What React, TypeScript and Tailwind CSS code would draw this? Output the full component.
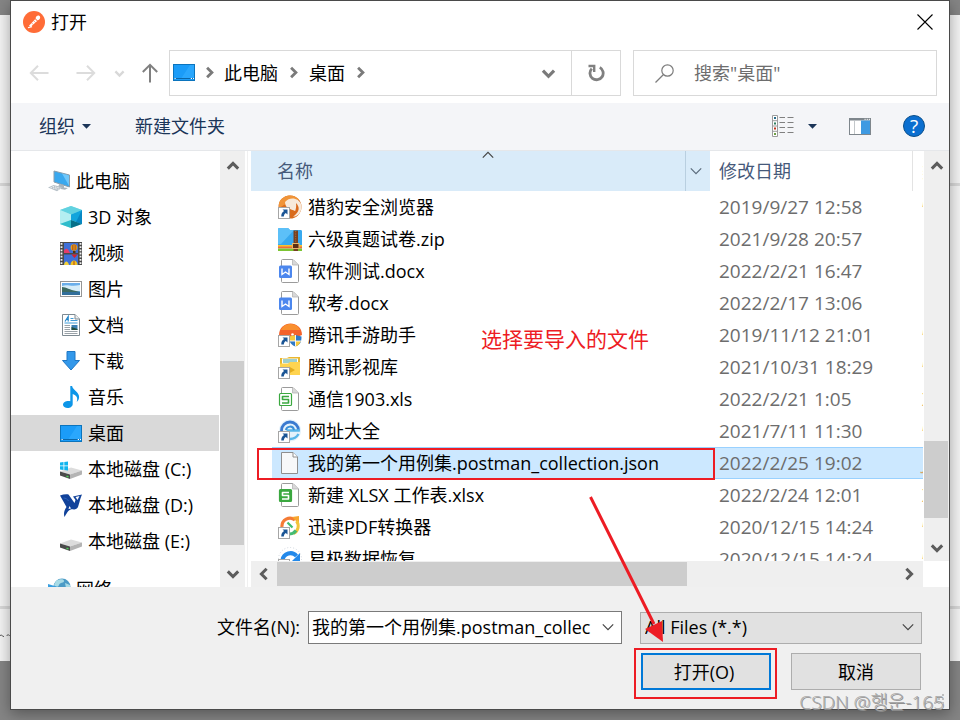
import React from 'react';

type IconProps = { className?: string };

/* ---------- small glyphs ---------- */

type Dir = 'up' | 'down' | 'left' | 'right';
const TURN: Record<Dir, string> = {
  up: 'rotate(0 7 7)',
  right: 'rotate(90 7 7)',
  down: 'rotate(180 7 7)',
  left: 'rotate(270 7 7)',
};

function BoldChevron({ dir, size = 14, color = '#5c5c5c', width = 3 }: { dir: Dir; size?: number; color?: string; width?: number }) {
  return (
    <svg width={size} height={size} viewBox="0 0 14 14" aria-hidden="true">
      <path d="M1.8 9.6 7 4.4l5.2 5.2" transform={TURN[dir]} fill="none" stroke={color} strokeWidth={width} />
    </svg>
  );
}

function ThinChevron({ dir, color = '#444' }: { dir: Dir; color?: string }) {
  return (
    <svg width="14" height="14" viewBox="0 0 14 14" aria-hidden="true">
      <path d="M1.8 9.6 7 4.4l5.2 5.2" transform={TURN[dir]} fill="none" stroke={color} strokeWidth="1.2" />
    </svg>
  );
}

function Caret() {
  return (
    <svg width="9" height="5" viewBox="0 0 9 5" aria-hidden="true">
      <path d="M0 0h9L4.500 4.800z" fill="#1b3558" />
    </svg>
  );
}

function PostmanLogo() {
  return (
    <svg width="22" height="22" viewBox="0 0 22 22" aria-hidden="true">
      <circle cx="11" cy="11" r="11" fill="#ff6c37" />
      <path d="M6 14.800 12.300 8l1.900 1.900-6.700 6z" fill="#fff" />
      <path d="M12.600 7.600c.2-2.200 2-3.600 3.900-2.700 1.500 1.500.3 3.600-2 4.500z" fill="#fff" />
      <path d="M8.500 11.800l2 2M10.600 9.700l2 2M12.300 8l2 2" stroke="#ff6c37" strokeWidth=".6" />
      <path d="M5 16.800l4-1.200" stroke="#fff" strokeWidth="1.200" />
    </svg>
  );
}

function Arrow({ dir, color }: { dir: 'left' | 'right' | 'up'; color: string }) {
  const turn = dir === 'left' ? '' : dir === 'right' ? 'rotate(180 10 10)' : 'rotate(90 10 10)';
  return (
    <svg width="20" height="20" viewBox="0 0 20 20" aria-hidden="true">
      <path d="M19.500 10H2M9 2.800 1.800 10 9 17.200" transform={turn} fill="none" stroke={color} strokeWidth="2" />
    </svg>
  );
}

function DesktopIcon({ className }: IconProps) {
  return (
    <svg width="22" height="17" viewBox="0 0 22 17" className={className} aria-hidden="true">
      <rect x=".5" y=".5" width="21" height="16" fill="#1b9cf8" stroke="#0b74bd" />
      <path d="M21 1v13H8.500L17 1z" fill="#33adff" opacity=".65" />
      <path d="M1 14.500h20" stroke="#0c67a8" />
      <path d="M1.500 14.500h1.200M17.800 14.500H19M20 14.500h1" stroke="#fff" />
    </svg>
  );
}

/* ---------- tree icons ---------- */

function ComputerIcon() {
  return (
    <svg width="24" height="22" viewBox="0 0 24 22" aria-hidden="true">
      <path d="M6 1l15.500 4v12L6 12z" fill="#3aa8ee" stroke="#8a9dab" strokeWidth="1" />
      <path d="M14 3.500l7 2v10.300z" fill="#6fc7fa" />
      <path d="M11 14l5 1v2.600l4 .4-3 1.700-7-1.300z" fill="#aab5bd" />
      <path d="M0 17.500 5.500 15l9 2.300-5.500 3.900z" fill="#b7c1c8" />
      <path d="M2.500 17.400l8 2M4.500 16.300l8 2" stroke="#fff" strokeWidth=".8" strokeDasharray="1.500 1" />
    </svg>
  );
}
function CubeIcon() {
  return (
    <svg width="22" height="22" viewBox="0 0 22 22" aria-hidden="true">
      <path d="M11 0 0 4v14l11 4 11-4V4z" fill="#8fe3ea" />
      <path d="M11 0 0 4l11 4.500L22 4z" fill="#62d2e0" />
      <path d="M0 4v14l11-4V8.500z" fill="#b4eef1" />
      <path d="M22 4v14l-11-4V8.500z" fill="#12a5dc" />
      <path d="M22 4v14l-6-2z" fill="#0788c4" />
      <path d="M0 18l11-4v8z" fill="#2fbccb" />
      <path d="M22 18l-11-4v8z" fill="#067089" />
    </svg>
  );
}
function VideoIcon() {
  return (
    <svg width="22" height="23" viewBox="0 0 22 23" aria-hidden="true">
      <path d="M0 0h22v23H0z" fill="#4a4a4a" />
      <path d="M1.500 1v22M20.500 1v22" stroke="#f0f0f0" strokeWidth="1.800" strokeDasharray="1.800 1.400" />
      <path d="M4 1h14v10H4zM4 12.500h14V23H4z" fill="#3e6fd8" />
      <path d="M4 8.500c2-3 4-2 6 2.500H4z" fill="#e43b6a" />
      <circle cx="14" cy="5.500" r="3.300" fill="#f1b71c" />
      <path d="M14 2.200v6.600M12.300 3v5M15.800 3v5" stroke="#a03019" strokeWidth=".8" />
      <path d="M13 9h2.500v2H13z" fill="#55320f" />
      <path d="M11.500 12.500h6L14.500 16z" fill="#d6202a" />
      <path d="M4 23c1-5 4-4 5 0z" fill="#f2d13b" />
      <path d="M10.500 23c0-6 7-6 7 0z" fill="#f2c41e" />
      <path d="M14 19v4" stroke="#b1401f" />
    </svg>
  );
}
function PictureIcon() {
  return (
    <svg width="22" height="16" viewBox="0 0 22 16" aria-hidden="true">
      <rect x=".5" y=".5" width="21" height="15" fill="#fff" stroke="#969696" />
      <path d="M2 2h18v12H2z" fill="#6aaeea" />
      <path d="M2 5c5-2 9 1 18-1v6H2z" fill="#d5ecf8" />
      <path d="M2 6c4 0 8 3 14 4l4 1v1H2z" fill="#3d6b62" />
      <path d="M2 11h18v3H2z" fill="#326f9b" />
    </svg>
  );
}
function DocumentIcon() {
  return (
    <svg width="18" height="22" viewBox="0 0 18 22" aria-hidden="true">
      <path d="M.5.5h12.500l4.500 4.500v16.500H.5z" fill="#fff" stroke="#7e8a92" />
      <path d="M13 .5V5h4.500" fill="#eee" stroke="#7e8a92" />
      <path d="M3 7.500 6.200 2.500v5M4.300 5.500H6" fill="none" stroke="#1f84c9" strokeWidth="1.200" />
      <path d="M8.500 4.500h3M8.500 6.500h7M2.500 9h13" stroke="#3f9bd6" />
      <path d="M2.500 11.500h5.500M2.500 13.500h5.500M2.500 15.500h5.500M2.500 17.500h13M2.500 19.500h13" stroke="#9aa2a8" />
      <path d="M9.500 11h6v5h-6z" fill="#3b80b4" />
      <path d="M9.500 13l6 2v1h-6z" fill="#234d3d" />
    </svg>
  );
}
function DownloadIcon() {
  return (
    <svg width="18" height="20" viewBox="0 0 18 20" aria-hidden="true">
      <path d="M5 .5h8v9h4.500L9 19 .5 9.500H5z" fill="#3398ea" stroke="#1f77c4" />
    </svg>
  );
}
function MusicIcon() {
  return (
    <svg width="17" height="22" viewBox="0 0 17 22" aria-hidden="true">
      <path d="M7.300 0h1.800c.6 4 7.400 6.200 7 11.200-.1 2-1 3.600-2.400 4.800 1.700-5-1-7-4-8v10c0 2.500-2.600 4-5 4-2.700 0-4.700-1.200-4.700-3.200 0-2.700 4-4.500 7.300-3.500z" fill="#0d96e8" />
    </svg>
  );
}
function DriveShape() {
  return (
    <>
      <path d="M0 13.500 11 9.500 22 12.500 10 16.500z" fill="#dcdcdc" />
      <path d="M0 13.500 10 16.500v4.500L0 17.500z" fill="#4b4b4b" />
      <path d="M10 16.500l12-4v4L10 21z" fill="#b4b4b4" />
      <path d="M6.500 18.200l2 .7" stroke="#4dd058" strokeWidth="1.500" />
    </>
  );
}
function SystemDriveIcon() {
  return (
    <svg width="22" height="23" viewBox="0 0 22 23" aria-hidden="true">
      <DriveShape />
      <path d="M0 4.500l3.500-.5v3.500H0zM4.300 4 8 3.400v4.100H4.300zM0 8.300h3.500V12L0 11.400zM4.300 8.300H8V12.500l-3.700-.4z" fill="#12b5ee" />
    </svg>
  );
}
function DriveIcon() {
  return (
    <svg width="22" height="23" viewBox="0 0 22 23" aria-hidden="true">
      <DriveShape />
    </svg>
  );
}
function EagleIcon() {
  return (
    <svg width="22" height="23" viewBox="0 0 22 23" aria-hidden="true">
      <path d="M0 1.500C3 .5 6 0 8.500.5L14.500 9 15.500 6 13 2.500 22 0.500c-1.200 3-2 5-2.500 7.500l-1.500 5c-1 2-3 2.800-5 2.200-4-.2-5 1.800-8.500 7.800-1-3-.5-6.500 2-10z" fill="#11429a" />
      <path d="M15.500 3l4-1-2 4z" fill="#fff" />
      <path d="M8.500 15l1-3 1.500 2.500z" fill="#fff" />
      <path d="M3.500 4c2 0 4 1 5 3" stroke="#2a62bd" fill="none" />
    </svg>
  );
}
function NetworkIcon() {
  return (
    <svg width="24" height="22" viewBox="0 0 24 22" aria-hidden="true">
      <circle cx="14" cy="9" r="8.500" fill="#4c9bc6" />
      <path d="M8 3c3-2 8-2.500 8 0s-4 1-5 4-4 2-5 0zM17 5l5 2v4l-4-1z" fill="#a8dbe6" />
      <path d="M0 6l10 3v8L0 14z" fill="#3a9fe0" />
    </svg>
  );
}

/* ---------- file icons ---------- */

function ShortcutBadge() {
  return (
    <>
      <rect x=".5" y="12.500" width="11" height="11" fill="#fff" stroke="#a6a6a6" />
      <path d="M4.500 14.500h5v5l-1.700-1.600c-1.500 1.100-1.800 2-2 3.600H3.300c-.2-2.500.8-4.500 2.800-5.500z" fill="#1a5595" />
    </>
  );
}
function FileSvg({ children }: { children: React.ReactNode }) {
  return (
    <svg width="24" height="24" viewBox="0 0 24 24" className="shrink-0" aria-hidden="true">
      {children}
    </svg>
  );
}
function CheetahIcon() {
  return (
    <FileSvg>
      <circle cx="12" cy="12" r="11.500" fill="#d96c1c" />
      <path d="M1 8C4-1 17-2 21 5L11 7 1 13z" fill="#f09438" />
      <path d="M7 7c5-6 14-4 16.300 2.500C24.500 16 20 22 15 21.500c3-2 3.500-4 2-5.500-4-2-10-2-10-9z" fill="#f7e9da" />
      <path d="M18 8c4 4 4 9-3 13.500-1 .5-3 .8-4 .5 5-2 8-7 7-14z" fill="#d9691d" />
      <ShortcutBadge />
    </FileSvg>
  );
}
function ZipIcon() {
  return (
    <FileSvg>
      <path d="M0 2.500c0-1 .5-1.500 1.500-1.500H10l2 2h10.500c1 0 1.500.5 1.500 1.500V20H0z" fill="#38a9ee" />
      <path d="M0 2.500c0-1 .5-1.500 1.500-1.500H10l2 2h4L3 17H0z" fill="#5cc0f8" />
      <path d="M0 18h24v2H0z" fill="#f7c52d" />
      <path d="M0 19.500h24v2H0z" fill="#ee6d3c" />
      <path d="M0 21.500h24V24H0z" fill="#7cc433" />
      <path d="M15.500 3.500h4.500V24h-4.500z" fill="#764021" />
      <path d="M17.700 4v12" stroke="#a8703a" strokeWidth="1" strokeDasharray="1.200 1.200" />
      <rect x="14.500" y="16.500" width="6.500" height="5" fill="#5a2e13" stroke="#e7b767" />
    </FileSvg>
  );
}
function Sheet() {
  return (
    <>
      <path d="M3.500 1.500c0-.6.400-1 1-1H15l5.500 5.500v16.500c0 .6-.4 1-1 1h-15c-.6 0-1-.4-1-1z" fill="#fff" stroke="#9b9b9b" />
      <path d="M14.500.5V6h6" fill="#d8d8d8" stroke="#b5b5b5" strokeWidth=".8" />
    </>
  );
}
function WordIcon() {
  return (
    <FileSvg>
      <Sheet />
      <rect x="1" y="6.500" width="13" height="12.500" rx="1.500" fill="#4c87ee" />
      <path d="M4 9.500v6l3.500-2.500 3.500 2.500v-6" fill="none" stroke="#fff" strokeWidth="1.400" />
    </FileSvg>
  );
}
function SpreadsheetIcon({ solid }: { solid?: boolean }) {
  return (
    <FileSvg>
      <Sheet />
      <rect x="1.500" y="6.500" width="12" height="12" rx="1" fill={solid ? '#3ba840' : '#fff'} stroke="#3ba840" strokeWidth="1.200" />
      <path d="M11 9.500H4.500v3H10.500v3.500H4" fill="none" stroke={solid ? '#fff' : '#3ba840'} strokeWidth="1.600" strokeLinejoin="round" />
    </FileSvg>
  );
}
function GameIcon() {
  return (
    <FileSvg>
      <path d="M1 12C1-3.500 24-3.500 24 12l-5 2H1z" fill="#f3622c" />
      <path d="M3 7C6-1 19-1 22 7z" fill="#f98f2f" />
      <circle cx="14.500" cy="11.500" r="1.300" fill="#fff" />
      <path d="M11 13.500l6.500-1.500 6 1.500c0 5-1 8-6 10-4-1.500-6.500-4-6.500-10z" fill="#2f79c6" />
      <path d="M17.500 18h5.300c-1 3-2.500 4.500-5.300 5.500zM11 13.500l6.500-1.500v6H11z" fill="#f6c93c" />
      <path d="M17.500 12v11.500M11 18h12" stroke="#fff" strokeWidth=".9" />
      <ShortcutBadge />
    </FileSvg>
  );
}
function MovieFolderIcon() {
  return (
    <FileSvg>
      <path d="M2 3h7l2-1h11v9H2z" fill="#e9b72f" />
      <path d="M4 3.500h16V9H4z" fill="#fff" />
      <path d="M5 5h14M5 7h14" stroke="#3f9f9b" strokeWidth="1.200" />
      <path d="M2 8.500h8L12 7h10v13H2z" fill="#ffd44f" />
      <path d="M11 11.500l6 3.500-6 3.500z" fill="#e3ac1f" />
      <ShortcutBadge />
    </FileSvg>
  );
}
function BrowserIcon() {
  return (
    <FileSvg>
      <circle cx="12" cy="11.500" r="11" fill="#e4f2fb" />
      <path d="M20.500 11.500A8.500 8.500 0 1 0 12 20" fill="none" stroke="#3a7ad0" strokeWidth="2.800" />
      <path d="M21.800 11.500H8.500M20.500 15c-2 3.500-5 5-8.500 5" fill="none" stroke="#58b6e8" strokeWidth="2.400" />
      <path d="M8 11c.5-4 7-5 8 0" fill="none" stroke="#3a8fd8" strokeWidth="2" />
      <ShortcutBadge />
    </FileSvg>
  );
}
function BlankFileIcon() {
  return (
    <FileSvg>
      <path d="M3.500 1.500H15l4.500 4.500v16.500h-16z" fill="#f7f8f9" stroke="#8e8e8e" />
      <path d="M15 1.500V6h4.500" fill="#fff" stroke="#8e8e8e" />
    </FileSvg>
  );
}
function PdfConvertIcon() {
  return (
    <FileSvg>
      <path d="M4 12a8 8 0 0 1 13-7" fill="none" stroke="#f47b35" strokeWidth="3.200" />
      <path d="M14 2l7-1v8z" fill="#f7a62f" />
      <path d="M18.500 6c3 4 2 10-3 12.500" fill="none" stroke="#f3c43a" strokeWidth="3" />
      <path d="M18 15.500c-2 3-6 4-9 3" fill="none" stroke="#44bb72" strokeWidth="3.200" />
      <path d="M9.500 7.500 14.500 12.500" fill="none" stroke="#41bd70" strokeWidth="2.200" />
      <ShortcutBadge />
    </FileSvg>
  );
}
function RecoveryIcon() {
  return (
    <FileSvg>
      <circle cx="12" cy="12" r="11.500" fill="#fff" stroke="#cfd6dd" strokeDasharray="1 2" />
      <path d="M4.500 13a8 8 0 0 1 14-4" fill="none" stroke="#2389ea" strokeWidth="4" />
      <path d="M22 6v8h-8z" fill="#2389ea" />
      <ShortcutBadge />
    </FileSvg>
  );
}

/* ---------- data ---------- */

const tree = [
  { label: '3D 对象', icon: <CubeIcon /> },
  { label: '视频', icon: <VideoIcon /> },
  { label: '图片', icon: <PictureIcon /> },
  { label: '文档', icon: <DocumentIcon /> },
  { label: '下载', icon: <DownloadIcon /> },
  { label: '音乐', icon: <MusicIcon /> },
  { label: '桌面', icon: <DesktopIcon />, selected: true },
  { label: '本地磁盘 (C:)', icon: <SystemDriveIcon /> },
  { label: '本地磁盘 (D:)', icon: <EagleIcon /> },
  { label: '本地磁盘 (E:)', icon: <DriveIcon /> },
];

const files = [
  { name: '猎豹安全浏览器', date: '2019/9/27 12:58', type: '快捷方式', icon: <CheetahIcon /> },
  { name: '六级真题试卷.zip', date: '2021/9/28 20:57', type: '', icon: <ZipIcon /> },
  { name: '软件测试.docx', date: '2022/2/21 16:47', type: '', icon: <WordIcon /> },
  { name: '软考.docx', date: '2022/2/17 13:06', type: '', icon: <WordIcon /> },
  { name: '腾讯手游助手', date: '2019/11/12 21:01', type: '快捷方式', icon: <GameIcon /> },
  { name: '腾讯影视库', date: '2021/10/31 18:29', type: '快捷方式', icon: <MovieFolderIcon /> },
  { name: '通信1903.xls', date: '2022/2/21 1:05', type: 'XLS 工作表', icon: <SpreadsheetIcon /> },
  { name: '网址大全', date: '2021/7/11 11:30', type: '快捷方式', icon: <BrowserIcon /> },
  { name: '我的第一个用例集.postman_collection.json', date: '2022/2/25 19:02', type: 'JSON 文件', icon: <BlankFileIcon />, selected: true },
  { name: '新建 XLSX 工作表.xlsx', date: '2022/2/24 12:01', type: 'XLSX 工作表', icon: <SpreadsheetIcon solid /> },
  { name: '迅读PDF转换器', date: '2020/12/15 14:24', type: '快捷方式', icon: <PdfConvertIcon /> },
  { name: '易极数据恢复', date: '2020/12/15 14:24', type: '快捷方式', icon: <RecoveryIcon /> },
];

/* ---------- sections ---------- */

function TitleBar() {
  return (
    <header className="flex h-[42px] shrink-0 items-center pl-3 pr-4">
      <PostmanLogo />
      <h1 className="ml-1.5 flex-1">打开</h1>
      <button type="button" aria-label="关闭">
        <svg width="16" height="16" viewBox="0 0 16 16" aria-hidden="true">
          <path d="M.5.5l15 15M15.500.5l-15 15" stroke="#000" strokeWidth="1.100" />
        </svg>
      </button>
    </header>
  );
}

function AddressRow() {
  return (
    <div className="mt-[7px] flex h-[46px] shrink-0 items-center pl-[18px] pr-3">
      <button type="button" aria-label="后退"><Arrow dir="left" color="#dcdcdc" /></button>
      <button type="button" aria-label="前进" className="ml-[27px]"><Arrow dir="right" color="#dcdcdc" /></button>
      <button type="button" aria-label="最近浏览的位置" className="ml-[18px]"><BoldChevron dir="down" size={11} color="#d8d8d8" /></button>
      <button type="button" aria-label="向上" className="ml-[15px]"><Arrow dir="up" color="#808080" /></button>
      <div className="ml-[9px] flex h-full flex-1 border border-[#d9d9d9]">
        <nav aria-label="路径" className="flex flex-1 items-center pb-px pl-[3px]">
          <DesktopIcon />
          <span className="ml-2"><BoldChevron dir="right" size={13} color="#7a7a7a" /></span>
          <a href="#pc" className="ml-2">此电脑</a>
          <span className="ml-[9px]"><BoldChevron dir="right" size={13} color="#7a7a7a" /></span>
          <a href="#desktop" className="ml-[9px]">桌面</a>
          <span className="ml-[9px]"><BoldChevron dir="right" size={13} color="#7a7a7a" /></span>
        </nav>
        <button type="button" aria-label="以前的位置" className="flex w-[46px] items-center justify-center">
          <BoldChevron dir="down" size={15} color="#7a7a7a" />
        </button>
        <button type="button" aria-label="刷新" className="flex w-[49px] items-center justify-center border-l border-[#d9d9d9]">
          <svg width="18" height="18" viewBox="0 0 18 18" aria-hidden="true">
            <path d="M12.800 3.400A6.600 6.600 0 1 1 4.800 4.600" fill="none" stroke="#808080" strokeWidth="2.800" />
            <path d="M1.500 2h5.700v6" fill="none" stroke="#808080" strokeWidth="2.400" />
          </svg>
        </button>
      </div>
      <label className="ml-3 flex h-full w-[304px] items-center border border-[#d9d9d9] pl-[21px]">
        <svg width="19" height="19" viewBox="0 0 19 19" aria-hidden="true">
          <circle cx="12.500" cy="6.500" r="5.700" fill="none" stroke="#7d7d7d" strokeWidth="1.200" />
          <path d="M8.500 10.500.5 18.500" stroke="#7d7d7d" strokeWidth="1.300" />
        </svg>
        <input
          type="text"
          aria-label="搜索桌面"
          placeholder={'搜索"桌面"'}
          className="ml-5 min-w-0 flex-1 outline-none placeholder:text-[#6d6d6d] placeholder:opacity-100"
        />
      </label>
    </div>
  );
}

function Toolbar() {
  return (
    <div className="mt-[7px] flex h-12 shrink-0 items-center border-b border-[#e5e7ea] bg-[#f4f5f8] pr-6 pb-px pl-7 text-[#1b3558]">
      <button type="button" className="flex items-center gap-[7px]">组织 <Caret /></button>
      <button type="button" className="ml-11">新建文件夹</button>
      <div className="flex-1" />
      <button type="button" aria-label="更改视图">
        <svg width="22" height="22" viewBox="0 0 22 22" aria-hidden="true">
          <path d="M.5.5h5v21h-5zM.5 5.700h5M.5 11h5M.5 16.300h5" fill="#fff" stroke="#9c9c9c" />
          <path d="M2 2h2v2H2z" fill="#256a8a" />
          <path d="M2 7.500h2v2H2z" fill="#2f7f60" />
          <path d="M2 12.500h2v2H2z" fill="#c0341d" />
          <path d="M2 18h2v2H2z" fill="#6d9f45" />
          <path d="M7.500 2.500h5.500M15.500 2.500h6M7.500 7.500h5.500M15.500 7.500h6M7.500 12.500h5.500M15.500 12.500h6M7.500 17.500h5.500M15.500 17.500h6" stroke="#808080" />
        </svg>
      </button>
      <button type="button" aria-label="更多选项" className="ml-[14px]"><Caret /></button>
      <button type="button" aria-label="显示预览窗格" className="ml-8">
        <svg width="22" height="17" viewBox="0 0 22 17" aria-hidden="true">
          <rect x=".5" y=".5" width="21" height="16" fill="#fff" stroke="#7e868c" />
          <path d="M0 1.500h22" stroke="#7e868c" strokeWidth="2" />
          <path d="M15.500 1.300h1.200M17.700 1.300h1.200M19.800 1.300h1.200" stroke="#fff" />
          <path d="M5.500 3v13" stroke="#c3c7ca" />
          <path d="M12 2.500h9V16h-9z" fill="#3e9ae2" />
        </svg>
      </button>
      <button type="button" aria-label="帮助" className="ml-8 flex size-[22px] items-center justify-center rounded-full border border-[#0b4f8a] bg-[#0b6fd0] text-[19px] leading-5 text-white">?</button>
    </div>
  );
}

function VerticalScroll({ label, before, thumb }: { label: string; before: string; thumb: string }) {
  return (
    <div aria-label={label} className="flex w-[25px] shrink-0 flex-col bg-[#efefef]">
      <button type="button" aria-label="向上滚动" className="flex h-[25px] w-[25px] shrink-0 items-end justify-center pb-[3px]"><BoldChevron dir="up" /></button>
      <div className={before} />
      <div className={`w-6 bg-[#cdcdcd] ${thumb}`} />
      <div className="flex-1" />
      <button type="button" aria-label="向下滚动" className="flex h-[26px] w-[25px] shrink-0 items-center justify-center"><BoldChevron dir="down" /></button>
    </div>
  );
}

function FolderTree() {
  return (
    <nav aria-label="文件夹" className="flex w-[240px] shrink-0">
      <div className="min-w-0 flex-1 overflow-hidden pt-3">
        <a href="#pc" className="flex h-9 items-center gap-1 pl-[37px]"><ComputerIcon />此电脑</a>
        <ul>
          {tree.map((item) => (
            <li key={item.label} className="w-[208px]">
              <a href="#folder" className={`flex h-9 items-center gap-[6px] pl-[49px] ${item.selected ? 'bg-[#d9d9d9]' : ''}`}>
                <span className="flex w-[22px] justify-center">{item.icon}</span>
                {item.label}
              </a>
            </li>
          ))}
        </ul>
        <a href="#network" className="mt-3 flex h-9 items-center gap-1 pl-[37px]"><NetworkIcon />网络</a>
      </div>
      <VerticalScroll label="文件夹滚动条" before="h-[185px]" thumb="h-[184px]" />
      <div className="w-[6px] shrink-0 border-r-[3px] border-l-2 border-white bg-[#f0f0f0]" />
    </nav>
  );
}

function FileTable() {
  return (
    <div className="mr-px min-w-0 flex-1 overflow-hidden">
      <table className="w-full table-fixed border-collapse text-left">
        <colgroup>
          <col className="w-[459px]" />
          <col className="w-[203px]" />
          <col />
        </colgroup>
        <thead>
          <tr className="h-10 text-[#45597a]">
            <th className="relative bg-[#d9ebf9] p-0 font-normal">
              <div className="flex h-10 items-center">
                <span className="flex-1 pl-[26px]">名称</span>
                <button type="button" aria-label="筛选" className="flex h-full w-[25px] items-center justify-center border-l border-[#b9cfe0] pr-1"><ThinChevron dir="down" color="#5b6b7c" /></button>
              </div>
              <span className="absolute -top-[3px] left-[230px] flex"><ThinChevron dir="up" /></span>
            </th>
            <th className="p-0 font-normal">
              <div className="flex h-10 items-center border-r border-[#e3e3e3] pl-[9px]">修改日期</div>
            </th>
            <th className="overflow-hidden p-0 pl-[9px] font-normal whitespace-nowrap text-[#d9a566]">类型</th>
          </tr>
        </thead>
        <tbody>
          {files.map((file) => {
            const fill = file.selected ? 'border-y border-[#99d1ff] bg-[#cce8ff]' : '';
            return (
              <tr key={file.name}>
                <td className="relative h-8 p-0">
                  <div className={`ml-[21px] flex h-8 items-center gap-[6px] pl-[6px] whitespace-nowrap ${fill}`}>
                    {file.icon}
                    {file.name}
                  </div>
                  {file.selected && <div className="absolute top-px -right-[5px] -bottom-px left-[6px] z-10 border-2 border-[#ed1c24]" />}
                </td>
                <td className="p-0">
                  <div className={`flex h-8 items-center pl-[9px] text-[19px] text-[#6d6d6d] ${fill}`}>{file.date}</div>
                </td>
                <td className="overflow-hidden p-0">
                  <div className={`flex h-8 items-center pl-[9px] whitespace-nowrap text-[#d9a566] ${fill}`}>{file.type}</div>
                </td>
              </tr>
            );
          })}
        </tbody>
      </table>
    </div>
  );
}

function FilePane() {
  return (
    <section aria-label="文件列表" className="flex min-w-0 flex-1 flex-col">
      <div className="flex min-h-0 flex-1">
        <FileTable />
        <VerticalScroll label="文件滚动条" before="h-[265px]" thumb="h-[77px]" />
      </div>
      <div className="flex h-[26px] shrink-0">
        <div className="flex flex-1 items-center bg-[#efefef]">
          <button type="button" aria-label="向左滚动" className="flex w-[26px] justify-center"><BoldChevron dir="left" /></button>
          <div className="h-6 w-[410px] bg-[#cdcdcd]" />
          <div className="flex-1" />
          <button type="button" aria-label="向右滚动" className="flex w-[28px] justify-center"><BoldChevron dir="right" /></button>
        </div>
        <div className="w-[26px]" />
      </div>
    </section>
  );
}

function Footer() {
  return (
    <footer className="h-[122px] shrink-0 bg-[#f0f0f0] pt-6">
      <div className="flex h-[33px] items-center pr-[27px]">
        <label htmlFor="filename" className="w-[297px] pr-2 pb-px text-right">文件名(N):</label>
        <div className="flex h-full flex-1 items-center border border-[#7a7a7a] bg-white pr-[6px] pb-px pl-[3px]">
          <input id="filename" type="text" defaultValue="我的第一个用例集.postman_collec" className="min-w-0 flex-1 outline-none" />
          <button type="button" aria-label="文件名列表"><ThinChevron dir="down" /></button>
        </div>
        <div className="relative ml-[18px] h-8 w-[282px]">
          <select aria-label="文件类型" className="h-full w-full appearance-none border border-[#adadad] bg-[#e1e1e1] pb-px pl-1 outline-none">
            <option>All Files (*.*)</option>
          </select>
          <span className="pointer-events-none absolute top-2 right-[7px] flex"><ThinChevron dir="down" /></span>
        </div>
      </div>
      <div className="mt-1 flex items-start justify-end gap-[14px] pr-7">
        <div className="h-[51px] w-[143px] border-2 border-[#ed1c24] pt-[3px] pr-1 pl-[5px]">
          <button type="button" className="h-[37px] w-full border-2 border-[#0078d7] bg-[#e1e1e1] pr-1">打开(O)</button>
        </div>
        <button type="button" className="mt-[5px] h-[37px] w-[130px] border border-[#adadad] bg-[#e1e1e1]">取消</button>
      </div>
    </footer>
  );
}

function Annotations() {
  return (
    <>
      <p className="absolute top-[324px] left-[470px] text-[21px] leading-7 text-[#ed1c24]">选择要导入的文件</p>
      <svg className="pointer-events-none absolute top-[494px] left-[577px]" width="80" height="150" viewBox="0 0 80 150" aria-hidden="true">
        <path d="M2.500 2 66 129" stroke="#ed1c24" strokeWidth="3" />
        <path d="M75 147 57 134l17-8z" fill="#ed1c24" />
      </svg>
      <svg className="absolute right-1 bottom-1 z-10" width="12" height="12" viewBox="0 0 12 12" aria-hidden="true">
        <path d="M9 1h2v2H9zM9 5h2v2H9zM9 9h2v2H9zM5 5h2v2H5zM5 9h2v2H5zM1 9h2v2H1z" fill="#bfbfbf" />
      </svg>
      <p className="absolute right-[5px] -bottom-[7px] font-['Open_Sans','Noto_Sans_CJK_KR',sans-serif] text-[19px] leading-7 font-light whitespace-nowrap text-[#a8a8a8] [text-shadow:1px_1px_0_#909090]">CSDN @행운-165</p>
    </>
  );
}

export default function App() {
  return (
    <div className="relative h-screen overflow-hidden bg-[linear-gradient(to_bottom,#858585_15px,#f4f4f4_15px,#f4f4f4_661px,#858585_661px)] px-[10px] pb-[10px] font-['Open_Sans','Noto_Sans_CJK_SC',sans-serif] text-[18px] leading-6 text-black">
      <div className="absolute top-[183px] right-0 left-0 h-[3px] bg-[#d9d9d9]" />
      <div className="absolute top-[606px] right-0 left-0 h-[3px] bg-[#d9d9d9]" />
      <svg className="absolute top-[633px] left-0" width="10" height="5" viewBox="0 0 10 5" aria-hidden="true">
        <path d="M0 2.500C2 1 2.500 4 4 3.500M6.500 3C8 1 9 2 10 3" fill="none" stroke="#555" />
      </svg>
      <main className="relative flex h-full flex-col border border-[#4a4a4a] bg-white shadow-[0_4px_14px_rgba(0,0,0,0.35)]">
        <TitleBar />
        <AddressRow />
        <Toolbar />
        <div className="flex min-h-0 flex-1 overflow-hidden">
          <FolderTree />
          <FilePane />
        </div>
        <Footer />
        <Annotations />
      </main>
    </div>
  );
}
